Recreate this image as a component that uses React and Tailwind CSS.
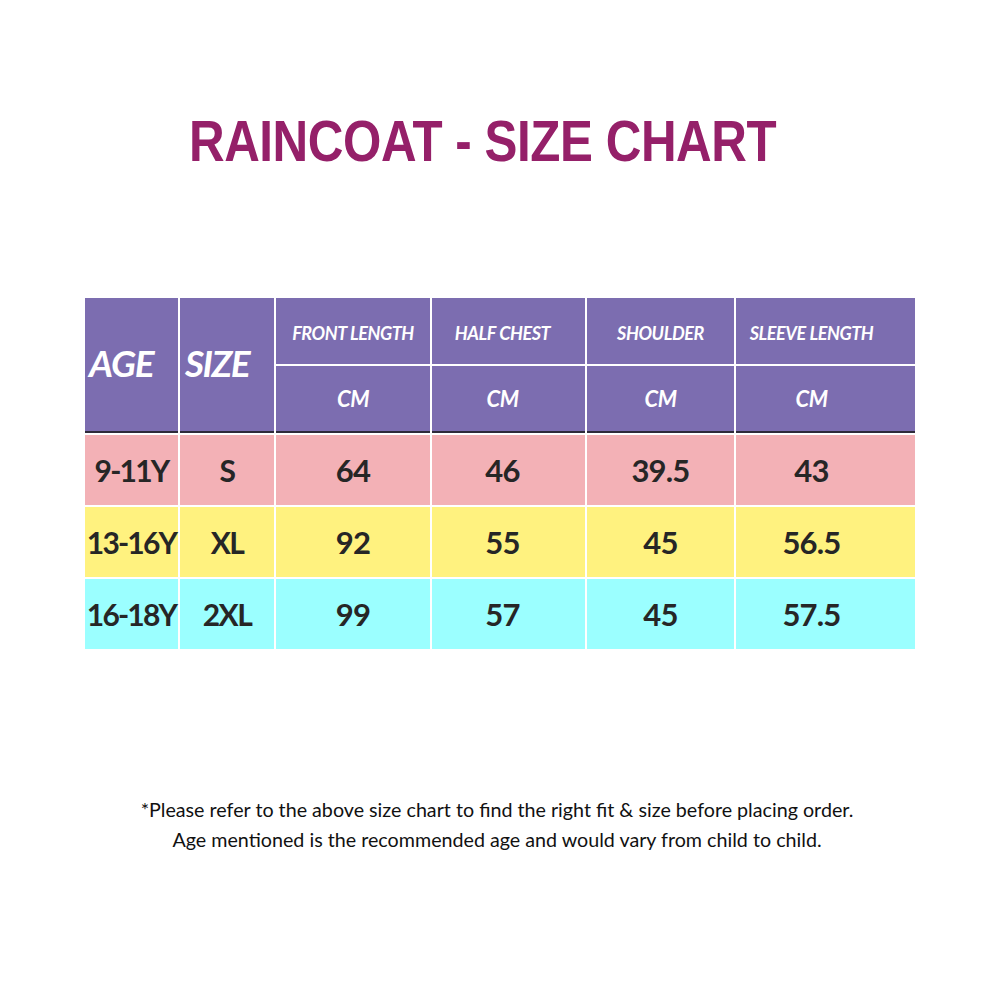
const rows = [
  { age: '9-11Y',  size: 'S',   vals: ['64', '46', '39.5', '43'],   bg: 'bg-[#f3b1b6]' },
  { age: '13-16Y', size: 'XL',  vals: ['92', '55', '45', '56.5'],   bg: 'bg-[#fff27f]' },
  { age: '16-18Y', size: '2XL', vals: ['99', '57', '45', '57.5'],   bg: 'bg-[#9bffff]' },
]

const measures = ['FRONT LENGTH', 'HALF CHEST', 'SHOULDER', 'SLEEVE LENGTH']

// last column's content sits left of centre in the original
const pad = ['', 'pr-[12px]', '', 'pr-[28px]']

export default function App() {
  return (
    <div className="w-[1000px] h-[1000px] bg-white flex flex-col items-center font-['Lato',sans-serif]">

      {/* Title — condensed look via horizontal squeeze */}
      <div className="w-full mt-[105px] pl-[189px]">
        <h1 className="inline-block origin-left scale-x-[0.865] text-[#952069] text-[57px] font-bold leading-[72px] tracking-[-0.5px] whitespace-nowrap font-['Liberation_Sans',sans-serif]">
          RAINCOAT - SIZE CHART
        </h1>
      </div>

      {/* Table */}
      <div className="mt-[121px] w-[830px] grid grid-cols-[93px_94px_154px_153px_147px_179px] gap-[2px] bg-white">
        <div className="row-span-2 bg-[#7c6db0] border-b-2 border-[#2e2a3a] flex items-center pl-[4px] pb-[4px] text-white italic font-bold text-[37px] tracking-[-1.2px]">AGE</div>
        <div className="row-span-2 bg-[#7c6db0] border-b-2 border-[#2e2a3a] flex items-center pl-[5px] pb-[4px] text-white italic font-bold text-[37px] tracking-[-1.5px]">SIZE</div>
        {measures.map((m, i) => (
          <div key={m} className={`h-[66px] bg-[#7c6db0] flex items-center justify-center pt-[4px] ${pad[i]} text-white italic font-bold text-[18px] tracking-[-0.4px]`}>{m}</div>
        ))}
        {measures.map((m, i) => (
          <div key={m + '-cm'} className={`h-[67px] bg-[#7c6db0] border-b-2 border-[#2e2a3a] flex items-center justify-center ${pad[i]} text-white italic font-bold text-[22px] tracking-[-0.5px]`}>CM</div>
        ))}

        {rows.map(r => (
          <div key={r.age} className="contents">
            <div className={`h-[70px] ${r.bg} flex items-center justify-center text-[#262626] font-bold text-[30px] tracking-[-1.8px]`}>{r.age}</div>
            <div className={`h-[70px] ${r.bg} flex items-center justify-center text-[#262626] font-bold text-[30px] tracking-[-1.5px]`}>{r.size}</div>
            {r.vals.map((v, i) => (
              <div key={i} className={`h-[70px] ${r.bg} flex items-center justify-center ${pad[i]} text-[#262626] font-bold text-[31px] tracking-[-0.8px]`}>{v}</div>
            ))}
          </div>
        ))}
      </div>

      {/* Note */}
      <div className="mt-[146px] pr-[6px] text-center text-[#111] text-[19.7px] leading-[30px]">
        <p>*Please refer to the above size chart to find the right fit &amp; size before placing order.</p>
        <p>Age mentioned is the recommended age and would vary from child to child.</p>
      </div>

    </div>
  )
}
